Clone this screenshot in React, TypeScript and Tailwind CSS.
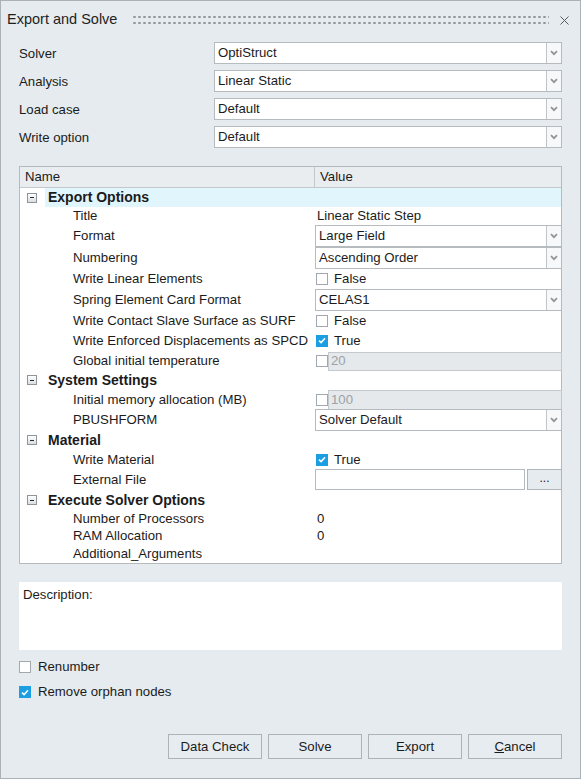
import React from 'react';

function Chevron() {
  return (
    <svg width="8" height="6" viewBox="0 0 8 6" className="block">
      <path d="M1 1.2 L4 4.2 L7 1.2" fill="none" stroke="#8e959b" strokeWidth="1.7" />
    </svg>
  );
}

function Combo({ value, className = '' }: { value: string; className?: string }) {
  return (
    <div className={`flex h-[22px] bg-white border border-[#b6bbc0] ${className}`}>
      <div className="flex-1 flex items-center pl-[3px] whitespace-nowrap overflow-hidden">{value}</div>
      <div className="w-[15px] bg-[#f6f8f9] border-l border-[#bfc4c8] flex items-center justify-center">
        <Chevron />
      </div>
    </div>
  );
}

function Box({ checked }: { checked?: boolean }) {
  if (checked) {
    return (
      <span className="w-[12px] h-[12px] shrink-0 bg-[#1c9fe2] flex items-center justify-center">
        <svg width="8" height="7" viewBox="0 0 8 7">
          <path d="M1 3.6 L3.1 5.6 L7 1.3" fill="none" stroke="white" strokeWidth="1.5" />
        </svg>
      </span>
    );
  }
  return <span className="w-[12px] h-[12px] shrink-0 bg-white border border-[#a2a8ad]" />;
}

function Minus() {
  return (
    <span className="w-[10px] h-[10px] border border-[#8d949a] bg-gradient-to-b from-white to-[#d9dee2] flex items-center justify-center">
      <span className="w-[4px] h-[1px] bg-[#2c2c2c]" />
    </span>
  );
}

function Group({ label, h, selected }: { label: string; h: string; selected?: boolean }) {
  return (
    <div className={`flex items-center ${h}`}>
      <div className="w-[25px] h-full pl-[7px] flex items-center">
        <Minus />
      </div>
      <div className={`flex-1 h-full pl-[3px] flex items-center font-bold text-[14px] ${selected ? 'bg-[#e1f5fc]' : ''}`}>
        {label}
      </div>
    </div>
  );
}

function Item({ label, h, children }: { label: string; h: string; children?: React.ReactNode }) {
  return (
    <div className={`flex ${h}`}>
      <div className="w-[295px] pl-[53px] flex items-center whitespace-nowrap">{label}</div>
      <div className="flex-1 flex items-center mr-[-1px]">{children}</div>
    </div>
  );
}

function BoolVal({ checked }: { checked?: boolean }) {
  return (
    <div className="flex items-center gap-[6px] pl-[1px]">
      <Box checked={checked} />
      <span>{checked ? 'True' : 'False'}</span>
    </div>
  );
}

function Disabled({ value, h }: { value: string; h: string }) {
  return (
    <div className={`flex items-center w-full pl-[1px] ${h}`}>
      <Box />
      <div className="flex-1 h-full bg-[#e5e9ec] border border-[#c4c9cd] flex items-center pl-[2px] text-[#9ca2a7]">
        {value}
      </div>
    </div>
  );
}

const formRows = [
  ['Solver', 'OptiStruct'],
  ['Analysis', 'Linear Static'],
  ['Load case', 'Default'],
  ['Write option', 'Default'],
];

export default function App() {
  return (
    <div className="w-[581px] h-[779px] bg-[#e5ebef] border border-[#aab1b7] flex flex-col font-['Liberation_Sans',Arial,sans-serif] text-[13.2px] text-[#1b1b1b]">
      {/* title bar */}
      <div className="h-[41px] flex items-center pb-[3px] pl-[6px] pr-[11px]">
        <span className="text-[14.5px] text-[#1f1f1f]">Export and Solve</span>
        <div className="flex-1 ml-[15px] mr-[11px] h-[12px] bg-[radial-gradient(circle,#8e969c_1px,transparent_1.4px)] bg-[length:5px_6px]" />
        <svg width="9" height="9" viewBox="0 0 9 9">
          <path d="M0.5 0.5 L8.5 8.5 M8.5 0.5 L0.5 8.5" stroke="#555b60" strokeWidth="1" />
        </svg>
      </div>

      <div className="flex flex-col px-[18px]">
        {/* solver form */}
        <div className="flex flex-col gap-[6px]">
          {formRows.map(([label, value]) => (
            <div key={label} className="flex items-center">
              <div className="w-[195px] pt-[1px]">{label}</div>
              <Combo value={value} className="flex-1" />
            </div>
          ))}
        </div>

        {/* property table */}
        <div className="mt-[18px] bg-white border border-[#b5babf] flex flex-col">
          <div className="flex h-[21px] bg-[#e9edf0] border-b border-[#c3c8cc]">
            <div className="w-[295px] pl-[5px] border-r border-[#c3c8cc] flex items-center">Name</div>
            <div className="flex-1 pl-[5px] flex items-center">Value</div>
          </div>

          <Group label="Export Options" h="h-[19px]" selected />
          <Item label="Title" h="h-[18px]">
            <span className="pl-[2px]">Linear Static Step</span>
          </Item>
          <Item label="Format" h="h-[22px]">
            <Combo value="Large Field" className="w-full" />
          </Item>
          <Item label="Numbering" h="h-[22px]">
            <Combo value="Ascending Order" className="w-full" />
          </Item>
          <Item label="Write Linear Elements" h="h-[20px]">
            <BoolVal />
          </Item>
          <Item label="Spring Element Card Format" h="h-[22px]">
            <Combo value="CELAS1" className="w-full" />
          </Item>
          <Item label="Write Contact Slave Surface as SURF" h="h-[20px]">
            <BoolVal />
          </Item>
          <Item label="Write Enforced Displacements as SPCD" h="h-[20px]">
            <BoolVal checked />
          </Item>
          <Item label="Global initial temperature" h="h-[20px]">
            <Disabled value="20" h="h-[19px]" />
          </Item>

          <Group label="System Settings" h="h-[18px]" />
          <Item label="Initial memory allocation (MB)" h="h-[21px]">
            <Disabled value="100" h="h-[20px]" />
          </Item>
          <Item label="PBUSHFORM" h="h-[20px]">
            <Combo value="Solver Default" className="w-full h-[21px]" />
          </Item>

          <Group label="Material" h="h-[20px]" />
          <Item label="Write Material" h="h-[19px]">
            <BoolVal checked />
          </Item>
          <Item label="External File" h="h-[21px]">
            <div className="flex w-full h-[21px] gap-[2px]">
              <div className="flex-1 bg-white border border-[#b6bbc0]" />
              <div className="w-[35px] bg-[#e5ebef] border border-[#b0b5ba] flex items-center justify-center text-[12px] pb-[3px]">
                ...
              </div>
            </div>
          </Item>

          <Group label="Execute Solver Options" h="h-[20px]" />
          <Item label="Number of Processors" h="h-[17px]">
            <span className="pl-[2px]">0</span>
          </Item>
          <Item label="RAM Allocation" h="h-[18px]">
            <span className="pl-[2px]">0</span>
          </Item>
          <Item label="Additional_Arguments" h="h-[18px]" />
        </div>

        {/* description */}
        <div className="mt-[18px] h-[68px] bg-white pt-[5px] pl-[4px] leading-[16px]">Description:</div>

        <div className="mt-[10px] h-[14px] flex items-center gap-[7px]">
          <Box />
          <span>Renumber</span>
        </div>
        <div className="mt-[11px] h-[14px] flex items-center gap-[7px]">
          <Box checked />
          <span>Remove orphan nodes</span>
        </div>

        {/* buttons */}
        <div className="mt-[35px] flex justify-end gap-[6px]">
          {['Data Check', 'Solve', 'Export'].map((b) => (
            <button key={b} className="w-[94px] h-[25px] border border-[#adb2b7] bg-[#e7ecf0] text-[13.2px] text-[#1b1b1b]">
              {b}
            </button>
          ))}
          <button className="w-[94px] h-[25px] border border-[#adb2b7] bg-[#e7ecf0] text-[13.2px] text-[#1b1b1b]">
            <span className="underline">C</span>ancel
          </button>
        </div>
      </div>
    </div>
  );
}
